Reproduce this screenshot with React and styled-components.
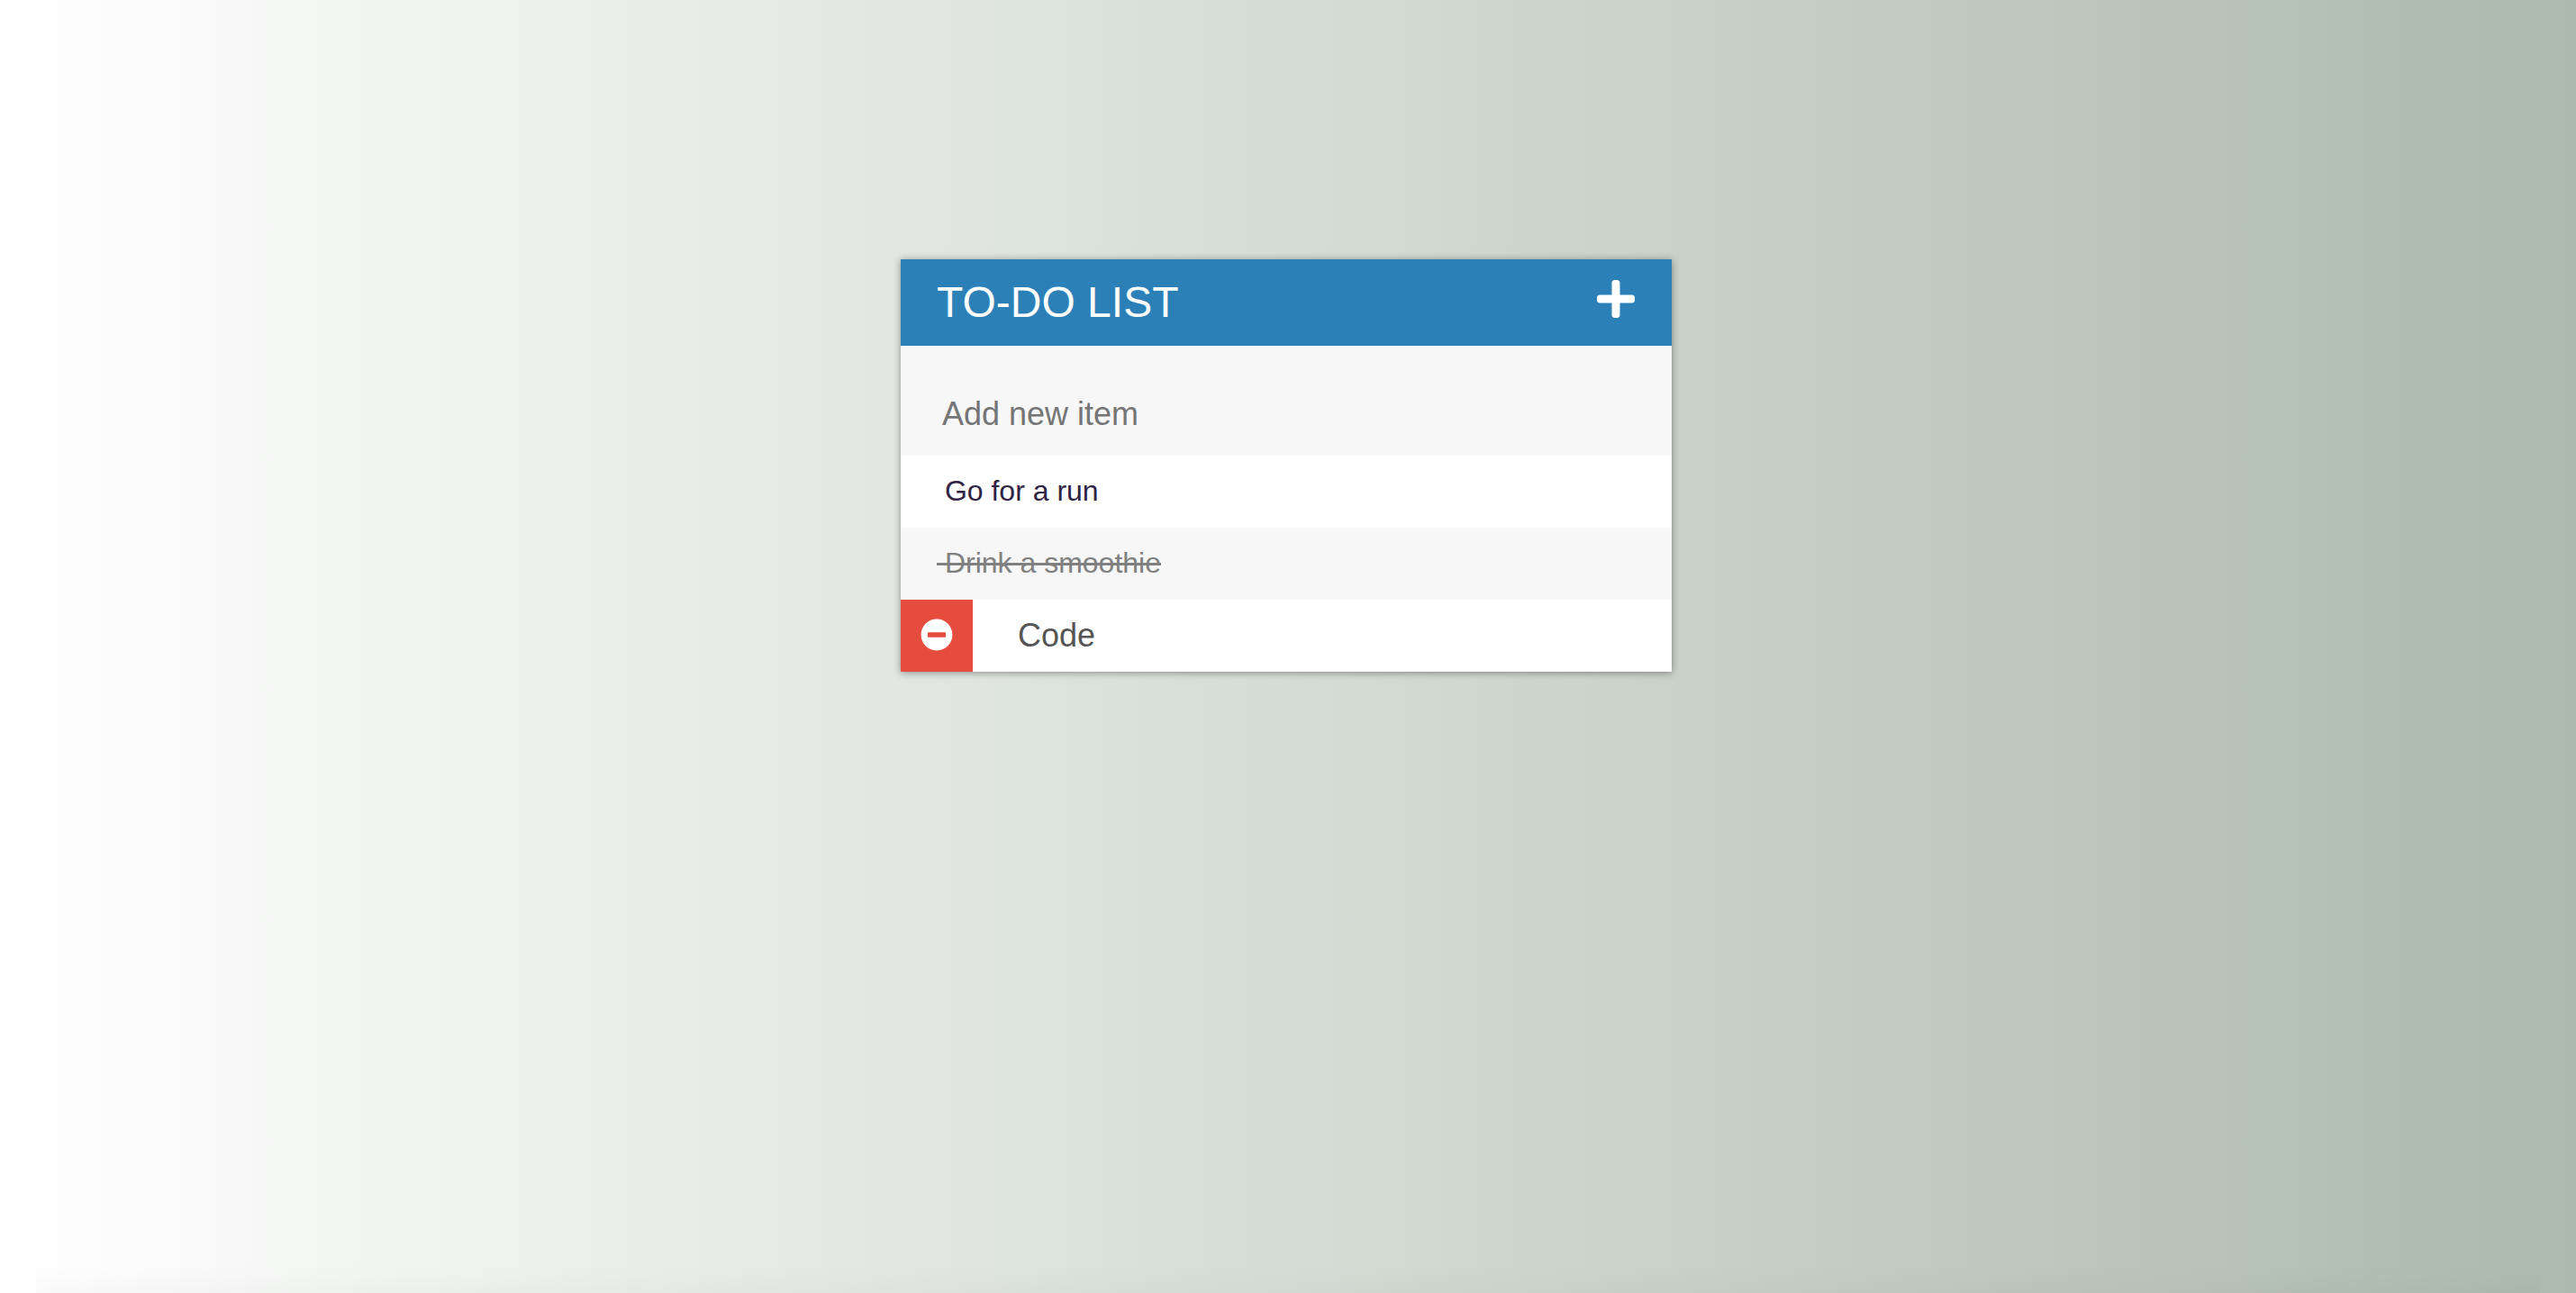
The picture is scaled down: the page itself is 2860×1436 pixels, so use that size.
import React, { useState } from "react";
import styled, { createGlobalStyle, css } from "styled-components";
import { FaPlus, FaMinusCircle } from "react-icons/fa";

const GlobalStyle = createGlobalStyle`
  *, *::before, *::after {
    box-sizing: border-box;
  }

  body {
    margin: 0;
    font-family: "Liberation Sans", Arial, sans-serif;
  }
`;

const Page = styled.main`
  display: flex;
  flex-direction: column;
  align-items: center;
  min-height: 100vh;
  padding: 288px 28px 48px 24px;
  background:
    linear-gradient(to top, rgba(0, 0, 0, 0.02), rgba(0, 0, 0, 0)) bottom / calc(100% - 80px) 32px no-repeat,
    linear-gradient(to right, #ffffff, #abbaab);
`;

const Card = styled.section`
  width: 100%;
  max-width: 856px;
  background: #f7f7f7;
  box-shadow: 0 1px 8px rgba(0, 0, 0, 0.4);
`;

const Header = styled.header`
  display: flex;
  align-items: center;
  justify-content: space-between;
  height: 96px;
  padding: 0 38px 0 40px;
  background: #2b80b8;
  color: #ffffff;
`;

const Title = styled.h1`
  margin: 0;
  font-size: 48px;
  font-weight: 400;
  line-height: 96px;
  text-transform: uppercase;
`;

const IconButton = styled.button`
  display: flex;
  align-items: center;
  justify-content: center;
  padding: 0;
  border: 0;
  background: none;
  color: #ffffff;
  font-size: 48px;
  cursor: pointer;
`;

const AddButton = styled(IconButton)`
  padding-bottom: 8px;
`;

const DeleteButton = styled(IconButton)`
  flex: none;
  width: 80px;
  height: 80px;
  padding-bottom: 2px;
  background: #e64c3d;
  font-size: 36px;
`;

const NewItem = styled.form`
  padding-top: 30px;
`;

const NewItemInput = styled.input`
  display: block;
  width: 100%;
  height: 92px;
  padding: 0 46px;
  border: 0;
  outline: 0;
  background: transparent;
  color: #555555;
  font-family: inherit;
  font-size: 36px;

  &::placeholder {
    color: #757575;
    opacity: 1;
  }
`;

const List = styled.ul`
  margin: 0;
  padding: 0;
  list-style: none;
`;

const Item = styled.li`
  display: flex;
  height: 80px;
  background: #ffffff;
  line-height: 78px;

  &:nth-child(2n) {
    background: #f7f7f7;
  }
`;

const ItemText = styled.span`
  padding: 0 40px;
  color: #2f2444;
  font-size: 32px;
  white-space: pre;

  ${({ $done }) =>
    $done &&
    css`
      color: #808080;
      text-decoration: line-through;
    `}

  ${({ $active }) =>
    $active &&
    css`
      color: #555555;
      font-size: 36px;
      line-height: 80px;
    `}
`;

const initialItems = [
  { id: 1, text: "Go for a run" },
  { id: 2, text: "Drink a smoothie", done: true },
  { id: 3, text: "Code", active: true },
];

export default function App() {
  const [items, setItems] = useState(initialItems);
  const [draft, setDraft] = useState("");

  const addItem = (event) => {
    event.preventDefault();
    const text = draft.trim();
    if (!text) return;
    setItems([...items, { id: Date.now(), text }]);
    setDraft("");
  };

  const removeItem = (id) => setItems(items.filter((item) => item.id !== id));

  return (
    <>
      <GlobalStyle />
      <Page>
        <Card>
          <Header>
            <Title>To-Do List</Title>
            <AddButton type="submit" form="new-item" aria-label="Add item">
              <FaPlus />
            </AddButton>
          </Header>
          <NewItem id="new-item" onSubmit={addItem}>
            <NewItemInput
              type="text"
              aria-label="Add new item"
              placeholder="Add new item"
              value={draft}
              onChange={(event) => setDraft(event.target.value)}
            />
          </NewItem>
          <List>
            {items.map((item) => (
              <Item key={item.id}>
                {item.active && (
                  <DeleteButton
                    type="button"
                    aria-label={`Delete ${item.text}`}
                    onClick={() => removeItem(item.id)}
                  >
                    <FaMinusCircle />
                  </DeleteButton>
                )}
                <ItemText $done={item.done} $active={item.active}>
                  {"\u00a0" + item.text}
                </ItemText>
              </Item>
            ))}
          </List>
        </Card>
      </Page>
    </>
  );
}
